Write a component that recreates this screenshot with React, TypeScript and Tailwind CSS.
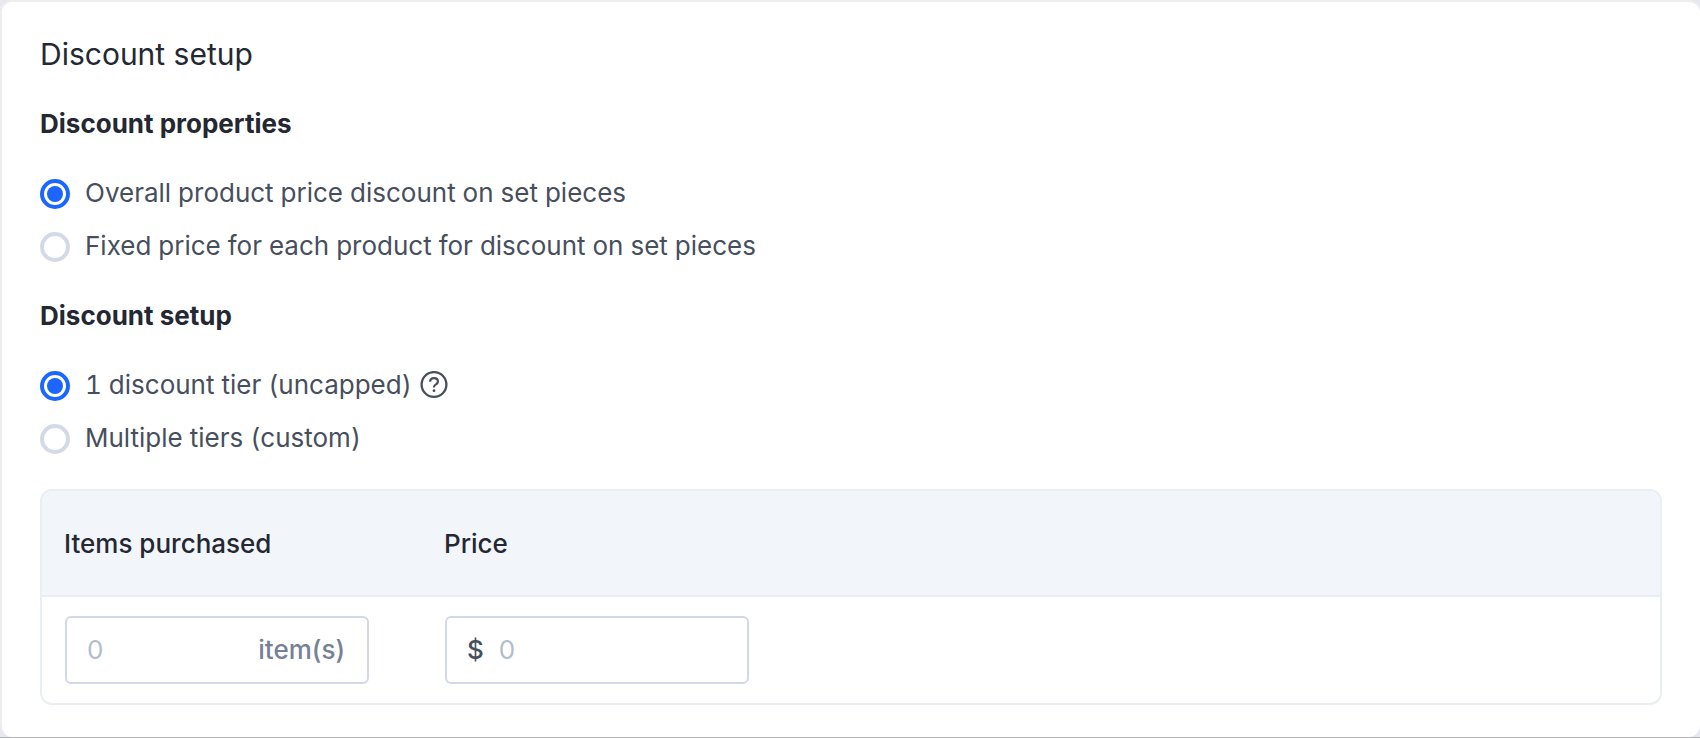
import { useState } from "react";
import type { ReactNode } from "react";

type RadioRowProps = {
  name: string;
  label: string;
  checked: boolean;
  onSelect: () => void;
  children?: ReactNode;
};

function RadioRow({ name, label, checked, onSelect, children }: RadioRowProps) {
  return (
    <div className="flex h-10 items-center gap-2">
      <label className="flex cursor-pointer items-center gap-[15px] text-[26px] leading-10 text-[#474f5e] tabular-nums">
        <input
          type="radio"
          name={name}
          checked={checked}
          onChange={onSelect}
          className="mt-0.5 grid size-[30px] shrink-0 appearance-none place-items-center rounded-full border-4 border-[#d3d9e6] bg-white before:size-4 before:rounded-full before:content-[''] checked:border-[#1a66ff] checked:before:bg-[#1a66ff]"
        />
        {label}
      </label>
      {children}
    </div>
  );
}

function HelpIcon() {
  return (
    <svg viewBox="0 0 28 28" className="size-7" fill="none" stroke="currentColor" aria-hidden="true">
      <circle cx="14" cy="13.5" r="12.4" strokeWidth="2.3" />
      <path
        d="M10.1 10.7c.1-2.2 1.7-3.5 3.9-3.5 2.3 0 3.9 1.3 3.9 3.2 0 1.5-.8 2.2-2 3-1.3.8-1.9 1.4-1.9 2.6v.6"
        strokeWidth="2.2"
      />
      <circle cx="14" cy="19.7" r="1.4" fill="currentColor" stroke="none" />
    </svg>
  );
}

export default function App() {
  const [property, setProperty] = useState("overall");
  const [tier, setTier] = useState("single");

  return (
    <main className="border-b border-[#b4b4b4] bg-[#e6e9f0] font-[Inter,sans-serif]">
      <section className="rounded-xl border-t-2 border-l-2 border-[#eeeeee] bg-white pt-8 pr-[38px] pb-8 pl-[38px]">
        <h1 className="text-[30px] leading-10 text-[#242833]">Discount setup</h1>

        <h2 className="mt-[30px] text-[26px] leading-10 font-bold text-[#242833]">Discount properties</h2>
        <div className="mt-[29px] flex flex-col gap-[13px]">
          <RadioRow
            name="property"
            label="Overall product price discount on set pieces"
            checked={property === "overall"}
            onSelect={() => setProperty("overall")}
          />
          <RadioRow
            name="property"
            label="Fixed price for each product for discount on set pieces"
            checked={property === "fixed"}
            onSelect={() => setProperty("fixed")}
          />
        </div>

        <h2 className="mt-[30px] text-[26px] leading-10 font-bold text-[#242833]">Discount setup</h2>
        <div className="mt-[29px] flex flex-col gap-[13px]">
          <RadioRow
            name="tier"
            label="1 discount tier (uncapped)"
            checked={tier === "single"}
            onSelect={() => setTier("single")}
          >
            <button type="button" aria-label="Help" className="text-[#474f5e]">
              <HelpIcon />
            </button>
          </RadioRow>
          <RadioRow
            name="tier"
            label="Multiple tiers (custom)"
            checked={tier === "multiple"}
            onSelect={() => setTier("multiple")}
          />
        </div>

        <div className="mt-[31px] overflow-hidden rounded-xl border-2 border-[#e9eef5]">
          <table className="w-full table-fixed border-collapse text-left text-[26px] leading-10">
            <thead className="bg-[#f2f5fa] text-[#242833]">
              <tr className="border-b-2 border-[#e9eef5]">
                <th scope="col" className="w-[380px] pt-[33px] pb-[31px] pl-[22px] font-medium">
                  Items purchased
                </th>
                <th scope="col" className="pt-[33px] pb-[31px] pl-[22px] font-medium">
                  Price
                </th>
              </tr>
            </thead>
            <tbody>
              <tr>
                <td className="py-[19px] pl-[23px]">
                  <label className="flex h-[68px] w-[304px] items-center rounded-md border-2 border-[#d3d8e6] px-5">
                    <input
                      type="text"
                      placeholder="0"
                      aria-label="Items purchased"
                      className="min-w-0 flex-1 bg-transparent outline-none placeholder:text-[#b3bccc]"
                    />
                    <span className="pr-0.5 font-medium text-[#768196]">item(s)</span>
                  </label>
                </td>
                <td className="py-[19px] pl-[23px]">
                  <label className="flex h-[68px] w-[304px] items-center gap-[15px] rounded-md border-2 border-[#d3d8e6] px-5">
                    <span className="font-medium text-[#474f5e]">$</span>
                    <input
                      type="text"
                      placeholder="0"
                      aria-label="Price"
                      className="min-w-0 flex-1 bg-transparent outline-none placeholder:text-[#b3bccc]"
                    />
                  </label>
                </td>
              </tr>
            </tbody>
          </table>
        </div>
      </section>
    </main>
  );
}
